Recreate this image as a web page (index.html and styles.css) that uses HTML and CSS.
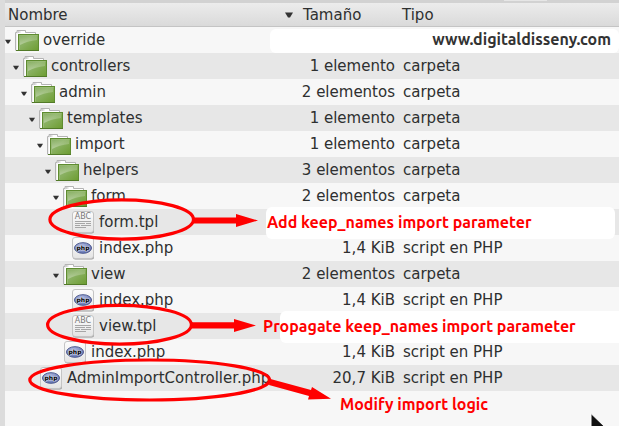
FILE: index.html
```
<!DOCTYPE html>
<html lang="es">
<head>
    <meta charset="UTF-8">
    <meta name="viewport" content="width=device-width, initial-scale=1.0">
    <title>override</title>
    <link rel="stylesheet" href="styles.css">
</head>
<body>
    <!-- Iconos -->
    <svg class="sprite" aria-hidden="true">
        <defs>
            <linearGradient id="green" x1="0" y1="0" x2="1" y2="1">
                <stop offset="0" stop-color="#7ba653"/>
                <stop offset="0.4" stop-color="#8bb264"/>
                <stop offset="1" stop-color="#6c9c30"/>
            </linearGradient>
            <linearGradient id="shine" x1="0" y1="0" x2="0" y2="1">
                <stop offset="0" stop-color="#fff" stop-opacity="0.1"/>
                <stop offset="1" stop-color="#fff" stop-opacity="0.35"/>
            </linearGradient>
            <linearGradient id="paper" x1="0" y1="0" x2="0" y2="1">
                <stop offset="0" stop-color="#fdfdfd"/>
                <stop offset="1" stop-color="#e4e4e4"/>
            </linearGradient>
            <linearGradient id="back" x1="0" y1="0" x2="1" y2="0">
                <stop offset="0" stop-color="#fff"/>
                <stop offset="0.15" stop-color="#d0d0d0"/>
                <stop offset="0.3" stop-color="#fff"/>
            </linearGradient>
            <radialGradient id="blue" cx="0.4" cy="0.3" r="0.7">
                <stop offset="0" stop-color="#b4bde2"/>
                <stop offset="1" stop-color="#6375b4"/>
            </radialGradient>
        </defs>
        <symbol id="folder" viewBox="0 0 24 24">
            <path d="M.5 22.500V4.500H2V2.500H10.500V4.500H20.500V7" fill="url(#back)" stroke="#b4b4b4"/>
            <path d="M2.500 22V5.500H20" fill="none" stroke="#fff"/>
            <rect x="3.500" y="6.500" width="20" height="16" fill="url(#green)" stroke="#5f8c30"/>
            <path d="M4.500 21.500V7.500H22.500" fill="none" stroke="#a9c78a" stroke-opacity="0.5"/>
            <path d="M5 8H22V12Q12 13 5 17Z" fill="url(#shine)"/>
            <path d="M1 22.500H24" stroke="#527a28"/>
        </symbol>
        <symbol id="text-file" viewBox="0 0 24 24">
            <rect x="2" y="2.500" width="21" height="21" rx="2.500" fill="#999"/>
            <rect x="1.500" y="1.500" width="21" height="21" rx="2.500" fill="url(#paper)" stroke="#c4c4c4"/>
            <path d="M4 11.500H20M4 13.500H14M15 13.500H20M4 15.500H9M10 15.500H20M4 17.500H15" stroke="#a6a6a6"/>
        </symbol>
        <symbol id="php-file" viewBox="0 0 24 24">
            <rect x="2" y="2.500" width="21" height="21" rx="2.500" fill="#999"/>
            <rect x="1.500" y="1.500" width="21" height="21" rx="2.500" fill="url(#paper)" stroke="#c4c4c4"/>
            <ellipse cx="12" cy="12" rx="8.500" ry="5.300" fill="url(#blue)" stroke="#4c598f"/>
        </symbol>
        <symbol id="triangle" viewBox="0 0 8 6">
            <path d="M0 0.500H8L5 5.500H3Z" fill="#333"/>
        </symbol>
    </svg>

    <div class="window">
        <div class="splitter"></div>
        <main class="pane">
            <div class="toolbar-edge"></div>
            <table class="files">
                <thead>
                    <tr>
                        <th class="col-name"><button class="sort" type="button">Nombre <svg class="sort-arrow"><use href="#triangle"/></svg></button></th>
                        <th class="col-size">Tamaño</th>
                        <th class="col-type">Tipo</th>
                    </tr>
                </thead>
                <tbody>
                    <tr>
                        <td><div class="entry"><button class="toggle" type="button" aria-label="Contraer override"><svg><use href="#triangle"/></svg></button><svg class="icon"><use href="#folder"/></svg>override</div></td>
                        <td class="size"></td>
                        <td></td>
                    </tr>
                    <tr>
                        <td><div class="entry level-1"><button class="toggle" type="button" aria-label="Contraer controllers"><svg><use href="#triangle"/></svg></button><svg class="icon"><use href="#folder"/></svg>controllers</div></td>
                        <td class="size">1 elemento</td>
                        <td>carpeta</td>
                    </tr>
                    <tr>
                        <td><div class="entry level-2"><button class="toggle" type="button" aria-label="Contraer admin"><svg><use href="#triangle"/></svg></button><svg class="icon"><use href="#folder"/></svg>admin</div></td>
                        <td class="size">2 elementos</td>
                        <td>carpeta</td>
                    </tr>
                    <tr>
                        <td><div class="entry level-3"><button class="toggle" type="button" aria-label="Contraer templates"><svg><use href="#triangle"/></svg></button><svg class="icon"><use href="#folder"/></svg>templates</div></td>
                        <td class="size">1 elemento</td>
                        <td>carpeta</td>
                    </tr>
                    <tr>
                        <td><div class="entry level-4"><button class="toggle" type="button" aria-label="Contraer import"><svg><use href="#triangle"/></svg></button><svg class="icon"><use href="#folder"/></svg>import</div></td>
                        <td class="size">1 elemento</td>
                        <td>carpeta</td>
                    </tr>
                    <tr>
                        <td><div class="entry level-5"><button class="toggle" type="button" aria-label="Contraer helpers"><svg><use href="#triangle"/></svg></button><svg class="icon"><use href="#folder"/></svg>helpers</div></td>
                        <td class="size">3 elementos</td>
                        <td>carpeta</td>
                    </tr>
                    <tr>
                        <td><div class="entry level-6"><button class="toggle" type="button" aria-label="Contraer form"><svg><use href="#triangle"/></svg></button><svg class="icon"><use href="#folder"/></svg>form</div></td>
                        <td class="size">2 elementos</td>
                        <td>carpeta</td>
                    </tr>
                    <tr>
                        <td><div class="entry level-7 file"><svg class="icon"><use href="#text-file"/><text x="12" y="9" class="glyph-abc">ABC</text></svg>form.tpl</div></td>
                        <td class="size"></td>
                        <td></td>
                    </tr>
                    <tr>
                        <td><div class="entry level-7 file"><svg class="icon"><use href="#php-file"/><text x="12" y="14" class="glyph-php">php</text></svg>index.php</div></td>
                        <td class="size">1,4 KiB</td>
                        <td>script en PHP</td>
                    </tr>
                    <tr>
                        <td><div class="entry level-6"><button class="toggle" type="button" aria-label="Contraer view"><svg><use href="#triangle"/></svg></button><svg class="icon"><use href="#folder"/></svg>view</div></td>
                        <td class="size">2 elementos</td>
                        <td>carpeta</td>
                    </tr>
                    <tr>
                        <td><div class="entry level-7 file"><svg class="icon"><use href="#php-file"/><text x="12" y="14" class="glyph-php">php</text></svg>index.php</div></td>
                        <td class="size">1,4 KiB</td>
                        <td>script en PHP</td>
                    </tr>
                    <tr>
                        <td><div class="entry level-7 file"><svg class="icon"><use href="#text-file"/><text x="12" y="9" class="glyph-abc">ABC</text></svg>view.tpl</div></td>
                        <td class="size"></td>
                        <td></td>
                    </tr>
                    <tr>
                        <td><div class="entry level-6 file"><svg class="icon"><use href="#php-file"/><text x="12" y="14" class="glyph-php">php</text></svg>index.php</div></td>
                        <td class="size">1,4 KiB</td>
                        <td>script en PHP</td>
                    </tr>
                    <tr>
                        <td><div class="entry level-3 file"><svg class="icon"><use href="#php-file"/><text x="12" y="14" class="glyph-php">php</text></svg>AdminImportController.php</div></td>
                        <td class="size">20,7 KiB</td>
                        <td>script en PHP</td>
                    </tr>
                </tbody>
            </table>
        </main>

        <!-- Anotaciones sobre la lista -->
        <div class="note note-site">www.digitaldisseny.com</div>
        <div class="note note-form">Add keep_names import parameter</div>
        <div class="patch"></div>
        <div class="note note-view">Propagate keep_names import parameter</div>
        <div class="note note-logic">Modify import logic</div>
        <svg class="marks" aria-hidden="true">
            <g fill="none" stroke="#f00" stroke-width="3.200">
                <ellipse cx="121.700" cy="219.500" rx="71.800" ry="19.600"/>
                <ellipse cx="119.500" cy="324.700" rx="71.900" ry="19.400"/>
                <ellipse cx="149.700" cy="380" rx="119.900" ry="20"/>
            </g>
            <g fill="#f00">
                <path d="M194 217.400H236V214L258 220.500L236 227V223.600H194Z"/>
                <path d="M192 322.300H234V319L256 325.500L234 332V328.500H192Z"/>
                <path d="M270.500 379L311 390L312 387L331 398.700L308 399.500L309 396L269 385Z"/>
            </g>
            <path d="M591 413.500V436L596 431L600 440H604L600 429H607Z" fill="#111" stroke="#fff"/>
        </svg>
    </div>
</body>
</html>
```
FILE: styles.css
```
body {
    margin: 0;
    font-family: "DejaVu Sans", sans-serif;
    font-size: 15px;
    color: #2e3030;
    background-color: #f7f7f7;
}

.sprite {
    position: absolute;
    width: 0;
    height: 0;
}

.window {
    position: relative;
    display: flex;
    min-height: 100vh;
    overflow: hidden;
}

.splitter {
    flex: none;
    width: 5px;
    background: #dcdcdc;
}

.pane {
    flex: 1;
    min-width: 0;
}

.toolbar-edge {
    height: 3px;
    background: linear-gradient(#e6e6e6, #e6e6e6) 499px 0 / 43px 1px no-repeat, #d2d2d2;
}

/* File list */
.files {
    width: 100%;
    table-layout: fixed;
    border-collapse: collapse;
}

.files th {
    height: 24px;
    padding: 0 0 0 5px;
    box-sizing: border-box;
    font-weight: normal;
    line-height: 22px;
    text-align: left;
    background: linear-gradient(#ececec, #d9d9d9);
    box-shadow: inset 0 -1px #c4c4c4;
}

.files .col-name {
    width: 293px;
    padding: 0 5px 0 3px;
}

.files .col-size {
    width: 97px;
}

.files .col-type {
    padding-left: 7px;
}

.sort {
    display: flex;
    align-items: center;
    justify-content: space-between;
    width: 100%;
    padding: 0;
    border: 0;
    background: none;
    font: inherit;
    line-height: 22px;
    color: inherit;
}

.sort-arrow {
    width: 8px;
    height: 6px;
}

.files td {
    height: 26px;
    padding: 0 0 0 8px;
    line-height: 26px;
    white-space: nowrap;
}

.files td:first-child {
    padding: 0;
}

.files td.size {
    padding: 0;
    text-align: right;
}

.files tbody tr:nth-child(even) {
    background-color: #e7e7e7;
}

.entry {
    display: flex;
    align-items: center;
    height: 26px;
}

.toggle {
    width: 6px;
    height: 26px;
    margin-right: 4px;
    padding: 2px 0 0;
    border: 0;
    background: none;
    line-height: 0;
}

.toggle svg {
    width: 6px;
    height: 5px;
}

.icon {
    flex: none;
    width: 24px;
    height: 24px;
    margin-right: 4px;
}

/* files have no toggle, keep its room */
.file .icon {
    margin-left: 10px;
}

.level-1 { padding-left: 8px; }
.level-2 { padding-left: 16px; }
.level-3 { padding-left: 24px; }
.level-4 { padding-left: 32px; }
.level-5 { padding-left: 40px; }
.level-6 { padding-left: 48px; }
.level-7 { padding-left: 56px; }

.glyph-abc {
    font: 8px "DejaVu Sans", sans-serif;
    fill: #777;
    text-anchor: middle;
}

.glyph-php {
    font: bold 6px "DejaVu Sans", sans-serif;
    fill: #000;
    stroke: #fff;
    stroke-width: 1px;
    stroke-opacity: 0.6;
    paint-order: stroke;
    text-anchor: middle;
}

/* Annotations */
.note {
    position: absolute;
    box-sizing: border-box;
    font-family: Ubuntu, "Noto Sans", sans-serif;
    font-size: 16px;
    font-weight: bold;
    white-space: nowrap;
    color: #f00;
}

.note-site {
    top: 29px;
    left: 270px;
    right: 0;
    height: 24px;
    padding-right: 8px;
    border-radius: 6px;
    line-height: 20px;
    text-align: right;
    color: #333;
    background-color: #fff;
}

.note-form {
    top: 207px;
    left: 266px;
    right: 4px;
    height: 32px;
    padding-left: 1px;
    border-radius: 6px;
    line-height: 30px;
    background-color: #fff;
}

.patch {
    position: absolute;
    top: 311px;
    left: 280px;
    right: 0;
    height: 32px;
    border-radius: 6px 0 0 6px;
    background-color: #fff;
}

.note-view {
    top: 311px;
    left: 263px;
    line-height: 30px;
}

.note-logic {
    top: 389px;
    left: 340px;
    line-height: 30px;
}

.marks {
    position: absolute;
    top: 0;
    left: 0;
    width: 100%;
    height: 100%;
    pointer-events: none;
}
```
